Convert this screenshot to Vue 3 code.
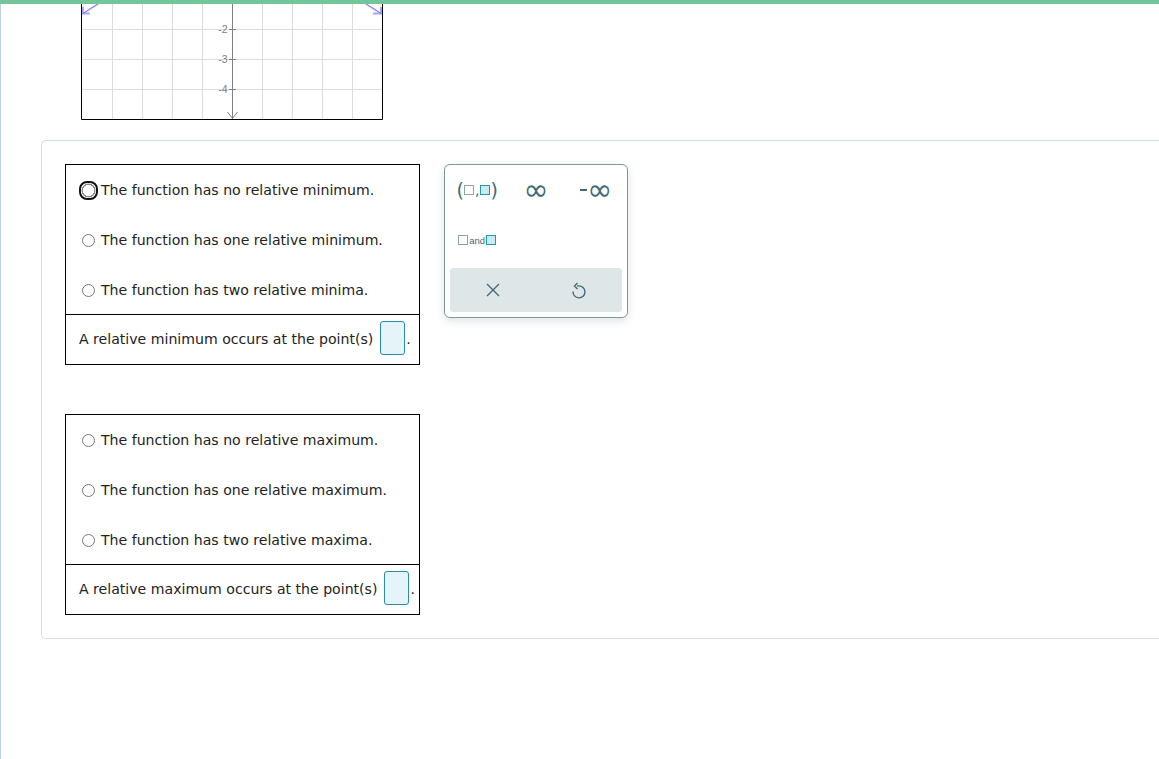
<script setup>
const minOptions = [
  'The function has no relative minimum.',
  'The function has one relative minimum.',
  'The function has two relative minima.'
]
const maxOptions = [
  'The function has no relative maximum.',
  'The function has one relative maximum.',
  'The function has two relative maxima.'
]
const gridX = [31, 61, 91, 121, 181, 211, 241, 271]
const gridY = [25, 55, 85]
const ticks = [
  { label: '-2', y: 25 },
  { label: '-3', y: 55 },
  { label: '-4', y: 85 }
]
</script>

<template>
  <div class="page">
    <div class="top-bar"></div>
    <div class="content">
      <div class="graph">
        <svg width="302" height="116" viewBox="0 0 302 116">
          <g stroke="#dcdcdc" stroke-width="1">
            <line v-for="x in gridX" :key="x" :x1="x + 0.5" y1="0" :x2="x + 0.5" y2="115" />
            <line v-for="y in gridY" :key="y" x1="0" :y1="y + 0.5" x2="301" :y2="y + 0.5" />
          </g>
          <line x1="151.5" y1="0" x2="151.5" y2="115" stroke="#808080" />
          <path d="M146.5 108 L151.5 114.5 L156.5 108" fill="none" stroke="#808080" />
          <g v-for="t in ticks" :key="t.label">
            <line x1="148" :y1="t.y + 0.5" x2="155" :y2="t.y + 0.5" stroke="#808080" />
            <text x="146.5" :y="t.y + 3.5" text-anchor="end" class="tick">{{ t.label }}</text>
          </g>
          <g fill="none" stroke="#8080ff">
            <path d="M17 0 L2 9.5" stroke-width="1.3" />
            <path d="M2 3 L2 9.5 L9 9.5" stroke-width="2" stroke-opacity="0.7" />
            <path d="M285 0 L300 9.5" stroke-width="1.3" />
            <path d="M300 3 L300 9.5 L292 9.5" stroke-width="2" stroke-opacity="0.7" />
          </g>
          <path d="M0.5 0 V115.5 H301.5 V0" fill="none" stroke="#000" />
        </svg>
      </div>

      <div class="panel">
        <div class="questions">
          <div class="box">
            <div class="options">
              <label v-for="(opt, i) in minOptions" :key="opt" class="option">
                <input type="radio" name="min" :class="{ focused: i === 0 }" />
                <span>{{ opt }}</span>
              </label>
            </div>
            <div class="answer">
              A relative minimum occurs at the point(s)
              <span class="answer-input"></span><span class="dot">.</span>
            </div>
          </div>

          <div class="box">
            <div class="options">
              <label v-for="opt in maxOptions" :key="opt" class="option">
                <input type="radio" name="max" />
                <span>{{ opt }}</span>
              </label>
            </div>
            <div class="answer">
              A relative maximum occurs at the point(s)
              <span class="answer-input"></span><span class="dot">.</span>
            </div>
          </div>
        </div>

        <div class="palette">
          <div class="palette-grid">
            <div class="tool shift">
              <span class="paren">(</span><span class="sq grey"></span><span class="comma">,</span><span class="sq teal"></span><span class="paren">)</span>
            </div>
            <div class="tool inf">∞</div>
            <div class="tool inf neg"><span class="minus"></span>∞</div>
            <div class="tool shift">
              <span class="sq grey"></span><span class="and">and</span><span class="sq teal"></span>
            </div>
          </div>
          <div class="palette-actions">
            <button class="action">
              <svg width="14" height="14" viewBox="0 0 14 14">
                <path d="M1 1 L13 13 M13 1 L1 13" fill="none" stroke="#3f6b78" stroke-width="1.4" />
              </svg>
            </button>
            <button class="action">
              <svg width="14" height="18" viewBox="0 0 14 18">
                <path d="M5 4.9 H7 A6 6 0 1 1 1 10.5 M5.5 2 L2.5 5 L5.5 8" fill="none" stroke="#3f6b78" stroke-width="1.4" />
              </svg>
            </button>
          </div>
        </div>
      </div>
    </div>
  </div>
</template>

<style>
html, body {
  margin: 0;
  background: #fff;
  overflow: hidden;
}
</style>

<style scoped>
.page {
  height: 759px;
  border-left: 1px solid #bed3da;
  box-sizing: border-box;
  font-family: "DejaVu Sans", Verdana, sans-serif;
  font-size: 14.1px;
  color: #222;
}

.top-bar {
  height: 4px;
  margin-left: -1px;
  background: #74c69a;
}

.content {
  padding-left: 40px;
}

.graph {
  height: 116px;
  padding-left: 40px;
}

.graph svg {
  display: block;
}

.tick {
  font-family: "Liberation Sans", Arial, sans-serif;
  font-size: 10.5px;
  fill: #808080;
}

.panel {
  margin-top: 20px;
  height: 499px;
  box-sizing: border-box;
  border: 1px solid #d3dfe0;
  border-right: none;
  border-radius: 5px 0 0 5px;
  padding: 23px 0 0 23px;
  display: flex;
  align-items: flex-start;
  gap: 24px;
}

.questions {
  display: flex;
  flex-direction: column;
  gap: 49px;
}

.box {
  width: 355px;
  box-sizing: border-box;
  border: 1px solid #000;
}

.options {
  border-bottom: 1px solid #000;
  height: 149px;
}

.option {
  display: flex;
  align-items: center;
  height: 50px;
  padding-left: 16px;
}

.option input {
  width: 13px;
  height: 13px;
  margin: 1px 6px 0 0;
  flex: none;
}

.option input.focused {
  appearance: none;
  box-sizing: border-box;
  width: 15px;
  height: 15px;
  margin: 1px 5px 0 -1px;
  background: radial-gradient(circle closest-side, #fff 0 72%, #8a8a8a 78% 90%, #fff 96%);
  border: none;
  border-radius: 6px;
  outline: 2px solid #111;
  outline-offset: 0;
}

.answer {
  height: 49px;
  box-sizing: border-box;
  padding: 0 0 1px 13px;
  display: flex;
  align-items: center;
  white-space: nowrap;
}

.answer-input {
  width: 25px;
  height: 34px;
  box-sizing: border-box;
  margin: 0 0 2px 7px;
  background: #e4f4f8;
  border: 1px solid #2b8fa3;
  border-radius: 3px;
}

.dot {
  margin-left: 1px;
}

.palette {
  width: 184px;
  height: 154px;
  box-sizing: border-box;
  border: 1px solid #7d98a1;
  border-radius: 6px;
  padding: 0 5px;
  background: #fff;
  box-shadow: 0 3px 8px rgba(90, 120, 130, 0.2);
}

.palette-grid {
  display: grid;
  grid-template-columns: repeat(3, 1fr);
  grid-auto-rows: 50px;
  height: 103px;
}

.tool {
  display: flex;
  align-items: center;
  justify-content: center;
  color: #3f6b78;
}

.shift {
  padding-right: 3px;
}

.inf {
  font-size: 30px;
  line-height: 1;
}

.neg {
  padding-left: 6px;
}

.minus {
  width: 7px;
  height: 2px;
  background: #3f6b78;
}

.paren {
  font-size: 19px;
  line-height: 1;
}

.comma {
  font-size: 14px;
  margin: 0 1px;
}

.sq {
  width: 10px;
  height: 10px;
  box-sizing: border-box;
  border: 1.5px solid #8fa6ae;
}

.sq.teal {
  background: #c9eaf1;
  border-color: #1c9bb0;
}

.and {
  font-family: "Liberation Sans", Arial, sans-serif;
  font-size: 9.5px;
  margin: 0 1px;
}

.palette-actions {
  display: grid;
  grid-template-columns: 1fr 1fr;
  height: 44px;
  background: #dfe6e8;
  border-radius: 3px;
}

.action {
  border: none;
  background: none;
  padding: 0;
  display: flex;
  align-items: center;
  justify-content: center;
}
</style>
